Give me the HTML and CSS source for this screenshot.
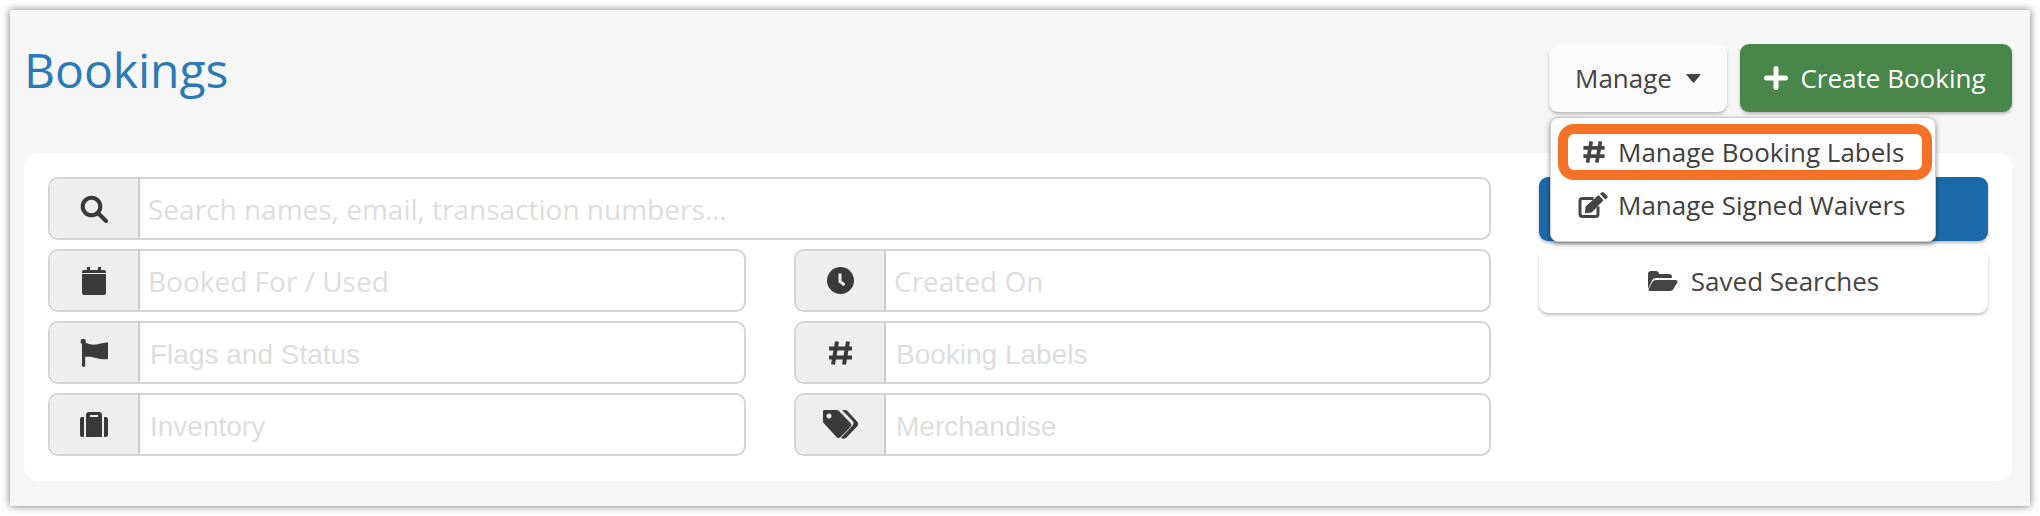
FILE: index.html
```html
<!DOCTYPE html>
<html lang="en">
<head>
    <meta charset="UTF-8">
    <title>Bookings</title>
    <link rel="stylesheet" href="styles.css">
</head>
<body>
    <div class="panel">
        <div class="header">
            <h1>Bookings</h1>
            <div class="actions">
                <div class="manage">
                    <button class="btn btn-light">Manage
                        <svg class="caret" viewBox="0 0 15 9"><path d="M1 0h13q1 0 .6 .8l-6.300 7.500q-.8 .9-1.600 0l-6.300-7.500q-.4-.8 .6-.8z"/></svg>
                    </button>
                    <div class="menu">
                        <div class="menu-item highlight">
                            <svg class="menu-hash" viewBox="0 0 25 26"><path d="M9.500 1.500l-4 23M19.500 1.500l-4 23M1 8.500h23M1 17.500h23"/></svg>
                            Manage Booking Labels
                        </div>
                        <div class="menu-item">
                            <svg class="menu-icon" viewBox="0 0 30 26"><path class="edit-box" d="M20 14.500v7.500q0 2.500-2.500 2.500h-13q-2.500 0-2.500-2.500v-13q0-2.500 2.500-2.500h11"/><path d="M7.500 14.500l13-11.500 5 5.200-11.800 12.300-6.700 .8zM22 1.800l2-1.500q.8-.5 1.500 0l3.800 3.800q.7 .8 0 1.600l-2 1.800z"/></svg>
                            Manage Signed Waivers
                        </div>
                    </div>
                </div>
                <button class="btn btn-green">
                    <svg class="plus" viewBox="0 0 24 24"><path d="M12 2.500v19M2.500 12h19"/></svg>
                    Create Booking
                </button>
            </div>
        </div>

        <div class="card">
            <div class="filters">
                <div class="field wide">
                    <span class="addon"><svg class="icon search" width="28" height="28" viewBox="0 0 28 28"><circle cx="11.500" cy="11.500" r="8.800"/><path d="M18 18l8 8"/></svg></span>
                    <span class="hint">Search names, email, transaction numbers...</span>
                </div>
                <div class="field">
                    <span class="addon"><svg class="icon" width="24" height="28" viewBox="0 0 24 28"><path d="M5 0h3v3h8v-3h3v3h3q2 0 2 2v1h-24v-1q0-2 2-2h3zM0 7h24v19q0 2-2 2h-20q-2 0-2-2z"/></svg></span>
                    <span class="hint">Booked For / Used</span>
                </div>
                <div class="field">
                    <span class="addon"><svg class="icon" width="27" height="27" viewBox="0 0 27 27"><circle cx="13.500" cy="13.500" r="13.500"/><path class="hand" d="M13 6.500v8l4.500 3.500"/></svg></span>
                    <span class="hint">Created On</span>
                </div>
                <div class="field">
                    <span class="addon"><svg class="icon" width="28" height="28" viewBox="0 0 28 28"><circle cx="3.200" cy="2.400" r="2.600"/><path d="M2 3h3.200v23.600q0 1.400-1.600 1.400t-1.600-1.400zM4 3c4 2 8 3 12 2.500 4-.5 8-1.700 12-2.200v16.700c-4 .5-8 .2-12-1-5-1.500-8-1.500-12-1z"/></svg></span>
                    <span class="hint sans">Flags and Status</span>
                </div>
                <div class="field">
                    <span class="addon"><svg class="icon hash" width="25" height="26" viewBox="0 0 25 26"><path d="M9 1.500l-4 23M20 1.500l-4 23M1 8.500h23M1 17.500h23"/></svg></span>
                    <span class="hint sans">Booking Labels</span>
                </div>
                <div class="field">
                    <span class="addon"><svg class="icon" width="28" height="25" viewBox="0 0 28 25"><path fill-rule="evenodd" d="M0 7q0-2 2-2h2v20h-2q-2 0-2-2zM24 5h2q2 0 2 2v16q0 2-2 2h-2zM6 5v-2q0-3 3-3h10q3 0 3 3v2 20h-16zM10 3v2h8v-2z"/></svg></span>
                    <span class="hint sans">Inventory</span>
                </div>
                <div class="field">
                    <span class="addon"><svg class="icon" width="35" height="29" viewBox="0 0 35 29"><path fill-rule="evenodd" d="M2.500 0h11q1.500 0 2.500 1l11.500 12q1.800 2 0 4l-10 10q-2 2-4 0l-12.500-13.500q-1-1-1-2.500v-9q0-2.500 2.500-2.500zM6 3.500a2.500 2.500 0 1 0 .01 0z"/><path d="M19 0h3q1.500 0 2.500 1l10 11q1.500 2 0 4l-11 11.500q-1 1-2.700 1.200-1.300 0-2.800-1l11.500-12q2-2.700 0-5z"/></svg></span>
                    <span class="hint sans">Merchandise</span>
                </div>
            </div>
            <div class="side">
                <button class="btn btn-blue"></button>
                <button class="btn btn-white">
                    <svg class="folder" viewBox="0 0 30 20"><path d="M0 18v-15q0-3 3-3h5q2 0 3 2v1h10q3 0 3 3v1h-16q-3 0-4 2.500z"/><path d="M7 9h20q3 0 2.500 2l-4 7q-1 2-3.500 2h-20q-2 0-1.500-1.500l3.500-7q1.200-2.500 3.500-2.500z"/></svg>
                    Saved Searches
                </button>
            </div>
        </div>
    </div>
</body>
</html>
```

FILE: styles.css
```css
html, body {
    margin: 0;
}

body {
    padding: 10px;
    background-color: #fff;
    font-family: "Open Sans", sans-serif;
    color: #444;
}

.panel {
    height: 496px;
    box-sizing: border-box;
    padding: 34px 18px 0 14px;
    background-color: #f6f6f6;
    box-shadow: 0 0 8px rgba(0, 0, 0, 0.55);
}

.header {
    display: flex;
    justify-content: space-between;
    height: 68px;
    margin-bottom: 41px;
}

h1 {
    margin: 0;
    font-size: 48px;
    line-height: 51px;
    font-weight: 400;
    color: #2a7ab8;
}

.actions {
    display: flex;
    gap: 13px;
}

.manage {
    position: relative;
}

.btn {
    display: flex;
    align-items: center;
    justify-content: center;
    border: none;
    border-radius: 9px;
    font-family: inherit;
    font-size: 26px;
    color: #444;
    box-shadow: 0 2px 3px rgba(0, 0, 0, 0.25);
}

.btn-light {
    width: 178px;
    height: 68px;
    gap: 14px;
    background-color: #fafafa;
}

.btn-green {
    width: 272px;
    height: 68px;
    gap: 12px;
    padding-right: 8px;
    background-color: #48864a;
    color: #fff;
}

.btn-blue {
    height: 64px;
    background-color: #1b69a8;
}

.btn-white {
    height: 64px;
    gap: 13px;
    background-color: #fff;
}

.caret {
    width: 15px;
    height: 9px;
    fill: #444;
}

.plus {
    width: 24px;
    height: 24px;
    fill: none;
    stroke: #fff;
    stroke-width: 5;
    stroke-linecap: round;
}

.folder {
    width: 30px;
    height: 20px;
    fill: #444;
}

.menu {
    position: absolute;
    top: 73px;
    left: 1px;
    width: 386px;
    height: 125px;
    box-sizing: border-box;
    padding: 6px 3px 0 7px;
    background-color: #fff;
    border: 1px solid #ccc;
    border-radius: 8px;
    box-shadow: 0 2px 5px rgba(0, 0, 0, 0.45);
    z-index: 2;
}

.menu-item {
    display: flex;
    align-items: center;
    gap: 10px;
    height: 50px;
    padding-left: 20px;
    font-size: 26px;
    white-space: nowrap;
    color: #3f3f3f;
}

.highlight {
    height: 36px;
    gap: 12px;
    padding-left: 14px;
    border: 10px solid #f57125;
    border-radius: 16px;
}

.menu-icon {
    width: 30px;
    height: 26px;
    fill: #444;
}

.menu-hash {
    width: 24px;
    height: 24px;
    fill: none;
    stroke: #444;
    stroke-width: 4;
}

.edit-box {
    fill: none;
    stroke: #444;
    stroke-width: 3;
}

.card {
    display: flex;
    gap: 48px;
    height: 328px;
    box-sizing: border-box;
    padding: 24px;
    background-color: #fff;
    border-radius: 14px;
}

.filters {
    display: grid;
    grid-template-columns: 698px 697px;
    grid-auto-rows: 63px;
    column-gap: 48px;
    row-gap: 9px;
    width: 1443px;
}

.filters .wide {
    grid-column: 1 / 3;
}

.field {
    display: flex;
    align-items: center;
    box-sizing: border-box;
    border: 2px solid #d4d4d4;
    border-radius: 10px;
    overflow: hidden;
}

.addon {
    display: flex;
    align-items: center;
    justify-content: center;
    flex: none;
    width: 90px;
    height: 100%;
    background-color: #eee;
    border-right: 2px solid #ccc;
    box-sizing: border-box;
}

.icon {
    flex: none;
    fill: #3a3a3a;
}

.search,
.hash {
    fill: none;
    stroke: #3a3a3a;
    stroke-width: 4;
}

.search {
    stroke-linecap: round;
}

.hand {
    fill: none;
    stroke: #eee;
    stroke-width: 3;
}

.hint {
    padding-left: 8px;
    font-size: 28px;
    color: #ddd;
    white-space: nowrap;
}

.sans {
    padding-top: 4px;
    padding-left: 10px;
    font-family: "Liberation Sans", sans-serif;
}

.side {
    display: flex;
    flex-direction: column;
    gap: 8px;
    width: 449px;
}
```
